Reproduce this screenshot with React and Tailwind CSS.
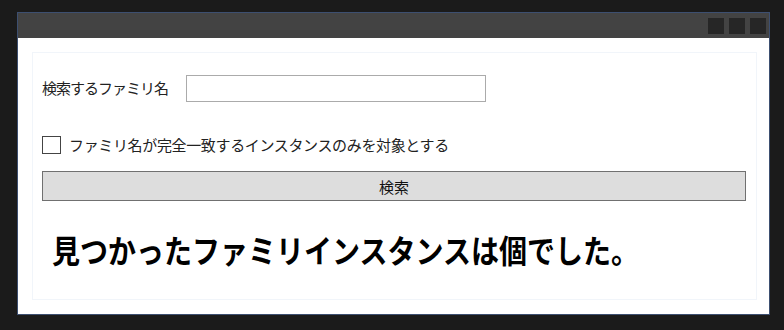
// App.jsx - family instance search window
export default function App() {
  const font = { fontFamily: '"Noto Sans CJK JP", "Noto Sans", sans-serif' }

  return (
    <div className="w-[784px] h-[330px] bg-[#1b1b1b] pt-[12px] pl-[17px]" style={font}>
      <div className="w-[753px] h-[303px] border border-[#3d4f70] flex flex-col">
        <div className="h-[25px] bg-[#434343] flex items-center justify-end gap-[5px] pr-[3px]">
          <div className="w-[16px] h-[16px] bg-[#262626]" />
          <div className="w-[16px] h-[16px] bg-[#262626]" />
          <div className="w-[16px] h-[16px] bg-[#262626]" />
        </div>

        <div className="flex-1 bg-white p-[14px] pr-[12px]">
          <div className="h-full border border-[#f1f5fa] pt-[22px] pl-[9px] pr-[10px]">
            <div className="flex items-center">
              <span className="w-[144px] text-[15px] text-[#222] tracking-[-1px]">検索するファミリ名</span>
              <input type="text" className="w-[300px] h-[27px] border border-[#ababab] bg-white outline-none" />
            </div>

            <label className="flex items-center mt-[34px] h-[18px]">
              <span className="w-[19px] h-[18px] border border-[#444] bg-white" />
              <span className="ml-[8px] text-[15px] text-[#222] tracking-[-0.35px]">
                ファミリ名が完全一致するインスタンスのみを対象とする
              </span>
            </label>

            <button className="mt-[17px] w-full h-[30px] bg-[#dddddd] border border-[#707070] text-[15px] text-[#111] leading-none">
              検索
            </button>

            <div className="mt-[28px] h-[40px] leading-[40px] ml-[10px] text-[32px] font-bold text-black origin-left scale-x-[0.875] whitespace-nowrap">
              見つかったファミリインスタンスは個でした。
            </div>
          </div>
        </div>
      </div>
    </div>
  )
}
